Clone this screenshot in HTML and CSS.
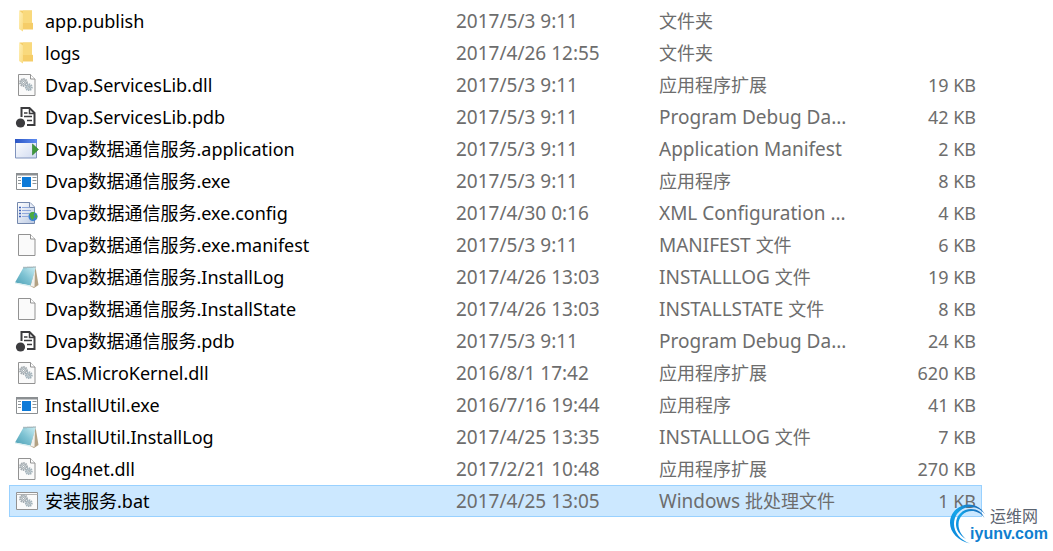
FILE: index.html
```html
<!DOCTYPE html>
<html lang="zh-CN">
<head>
<meta charset="utf-8">
<title>文件列表</title>
<link rel="stylesheet" href="styles.css">
</head>
<body>
<svg class="defs" aria-hidden="true">
  <defs>
    <linearGradient id="g-fold" x1="0" y1="0" x2="1" y2="1"><stop offset="0" stop-color="#fff0b8"/><stop offset="1" stop-color="#fadb80"/></linearGradient>
    <linearGradient id="g-bar" x1="0" x2="1"><stop offset="0" stop-color="#2b55c4"/><stop offset="1" stop-color="#5f8df0"/></linearGradient>
    <linearGradient id="g-win" x1="0" y1="0" x2="1" y2="1"><stop offset="0" stop-color="#ffffff"/><stop offset="1" stop-color="#cfdaf0"/></linearGradient>
    <linearGradient id="g-cfg" x1="0" y1="0" x2="1" y2="1"><stop offset="0" stop-color="#ffffff"/><stop offset="1" stop-color="#b9c8e2"/></linearGradient>
    <linearGradient id="g-note" x1="1" y1="0" x2="0" y2="1"><stop offset="0" stop-color="#cdeef3"/><stop offset=".5" stop-color="#7fc3d3"/><stop offset="1" stop-color="#4b9fb5"/></linearGradient>
    <linearGradient id="g-arc" x1="0" y1="1" x2="1" y2="0"><stop offset="0" stop-color="#0a7fd6"/><stop offset=".5" stop-color="#14a5ea"/><stop offset="1" stop-color="#1b5ca8"/></linearGradient>
    <g id="gears" fill="none">
      <circle cx="8.500" cy="9.500" r="3.400" stroke="#a3abb0" stroke-width="2" stroke-dasharray="1.500 .7"/>
      <circle cx="8.500" cy="9.500" r="2.600" fill="#dfe4e7" stroke="#a3abb0"/>
      <circle cx="8.500" cy="9.500" r="1" fill="#fff" stroke="#8a959b" stroke-width=".8"/>
      <circle cx="13.800" cy="14.200" r="3" stroke="#a3b2ba" stroke-width="1.800" stroke-dasharray="1.300 .7"/>
      <circle cx="13.800" cy="14.200" r="2.200" fill="#dbe5ea" stroke="#a3b2ba"/>
      <circle cx="13.800" cy="14.200" r=".9" fill="#fff" stroke="#8a959b" stroke-width=".8"/>
    </g>
    <symbol id="i-folder" viewBox="0 0 24 24">
      <path d="M4.500 1.500h12.500v12l1 .8v6.200H8z" fill="#f5cd68"/>
      <path d="M8 1.500h9v12.500H8z" fill="#f9d97c"/>
      <path d="M4 1.500L8 4.500V22.500L4 20z" fill="url(#g-fold)"/>
    </symbol>
    <symbol id="i-file" viewBox="0 0 24 24">
      <path d="M3.500 1.500h12l4.500 4.500v16.500h-16.500z" fill="#fafafa" stroke="#929292"/>
      <path d="M15.500 1.500v4.500h4.500" fill="#fff" stroke="#929292"/>
    </symbol>
    <symbol id="i-dll" viewBox="0 0 24 24"><use href="#i-file"/><use href="#gears"/></symbol>
    <symbol id="i-pdb" viewBox="0 0 24 24">
      <path d="M6.500 12V3h8l5 5V20H12" fill="#fff" stroke="#3c3c3f" stroke-width="2"/>
      <path d="M14.500 3v5.500H19.500" fill="none" stroke="#3c3c3f" stroke-width="1.500"/>
      <path d="M9 8h3.500M9 11.500h8M12 15.500h5" stroke="#3c3c3f" stroke-width="1.600"/>
      <circle cx="5.500" cy="18" r="4.600" fill="#3c3c3f"/>
    </symbol>
    <symbol id="i-app" viewBox="0 0 24 24">
      <path d="M.5 2.500h21v18.500h-21z" fill="url(#g-win)" stroke="#7f93bd"/>
      <path d="M0 2h22v4H0z" fill="url(#g-bar)"/>
      <path d="M17.500 7L23.500 12.500L17.500 18z" fill="#3f9a3c" stroke="#2c7a2b" stroke-width=".6"/>
    </symbol>
    <symbol id="i-exe" viewBox="0 0 24 24">
      <path d="M1.500 4.500h21v16h-21z" fill="#fff" stroke="#8b8f92"/>
      <path d="M1 4h22v2.500H1z" fill="#8b8f92"/>
      <path d="M7 8h9v10H7z" fill="#0d7ad8"/>
      <path d="M3 8.500h3M3 11.500h3M3 14.500h3M17.500 8.500h4M17.500 11.500h4M17.500 14.500h4" stroke="#8f9699"/>
    </symbol>
    <symbol id="i-cfg" viewBox="0 0 24 24">
      <path d="M2.500 1.500h12.500l4.500 4.500v16.500H2.500z" fill="url(#g-cfg)" stroke="#7488ad"/>
      <path d="M14.500 1.500v5h5" fill="#e8eef8" stroke="#7488ad"/>
      <path d="M4 6.500h2M4 9.500h2M4 12.500h2M4 15.500h2" stroke="#3c62b8" stroke-width="1.500"/>
      <path d="M7 6.500h7M7 9.500h9M7 12.500h7M7 15.500h6" stroke="#8fa8dc"/>
      <circle cx="18" cy="15.500" r="4.600" fill="#3a7fd0"/>
      <path d="M14.500 13c1-2 4-2.500 5.500-1.500l-1.500 2.500 1 2-2 3c-1.500-1-3-4-3-6zM20.500 13l1.800 2-1 3-1.300-2z" fill="#4cab3f"/>
    </symbol>
    <symbol id="i-note" viewBox="0 0 24 24">
      <path d="M20.500 2L23.500 20 19 23l-4-2z" fill="#b3a183"/>
      <path d="M20 4l-.5 18L15.500 21z" fill="#f1f1ee"/>
      <path d="M8.500 2.500L21 2 15.500 20.500 0 17.500z" fill="url(#g-note)"/>
      <path d="M8.500 2.500L21 2" stroke="#7b8b90" stroke-width="1.500" stroke-dasharray="1 1"/>
      <path d="M0 17.500l15.500 3-.3 1.200L0 18.500z" fill="#dceef0"/>
    </symbol>
    <symbol id="i-bat" viewBox="0 0 24 24">
      <path d="M1.500 3.500h21v17h-21z" fill="#fafafa" stroke="#929292"/>
      <path d="M1.500 5.500h21" stroke="#b4b4b4"/>
      <use href="#gears"/>
    </symbol>
  </defs>
</svg>
<main class="listing">
<table class="files">
  <colgroup><col class="c-name"><col class="c-date"><col class="c-type"><col class="c-size"></colgroup>
  <tbody>
  <tr><td class="name"><div class="entry"><svg class="icon"><use href="#i-folder"/></svg><span>app.publish</span></div></td><td>2017/5/3 9:11</td><td><span class="han">文件夹</span></td><td class="size"></td></tr>
  <tr><td class="name"><div class="entry"><svg class="icon"><use href="#i-folder"/></svg><span>logs</span></div></td><td>2017/4/26 12:55</td><td><span class="han">文件夹</span></td><td class="size"></td></tr>
  <tr><td class="name"><div class="entry"><svg class="icon"><use href="#i-dll"/></svg><span>Dvap.ServicesLib.dll</span></div></td><td>2017/5/3 9:11</td><td><span class="han">应用程序扩展</span></td><td class="size">19 KB</td></tr>
  <tr><td class="name"><div class="entry"><svg class="icon"><use href="#i-pdb"/></svg><span>Dvap.ServicesLib.pdb</span></div></td><td>2017/5/3 9:11</td><td>Program Debug Da...</td><td class="size">42 KB</td></tr>
  <tr><td class="name"><div class="entry"><svg class="icon"><use href="#i-app"/></svg><span>Dvap<span class="han">数据通信服务</span>.application</span></div></td><td>2017/5/3 9:11</td><td>Application Manifest</td><td class="size">2 KB</td></tr>
  <tr><td class="name"><div class="entry"><svg class="icon"><use href="#i-exe"/></svg><span>Dvap<span class="han">数据通信服务</span>.exe</span></div></td><td>2017/5/3 9:11</td><td><span class="han">应用程序</span></td><td class="size">8 KB</td></tr>
  <tr><td class="name"><div class="entry"><svg class="icon"><use href="#i-cfg"/></svg><span>Dvap<span class="han">数据通信服务</span>.exe.config</span></div></td><td>2017/4/30 0:16</td><td>XML Configuration ...</td><td class="size">4 KB</td></tr>
  <tr><td class="name"><div class="entry"><svg class="icon"><use href="#i-file"/></svg><span>Dvap<span class="han">数据通信服务</span>.exe.manifest</span></div></td><td>2017/5/3 9:11</td><td>MANIFEST <span class="han">文件</span></td><td class="size">6 KB</td></tr>
  <tr><td class="name"><div class="entry"><svg class="icon"><use href="#i-note"/></svg><span>Dvap<span class="han">数据通信服务</span>.InstallLog</span></div></td><td>2017/4/26 13:03</td><td>INSTALLLOG <span class="han">文件</span></td><td class="size">19 KB</td></tr>
  <tr><td class="name"><div class="entry"><svg class="icon"><use href="#i-file"/></svg><span>Dvap<span class="han">数据通信服务</span>.InstallState</span></div></td><td>2017/4/26 13:03</td><td>INSTALLSTATE <span class="han">文件</span></td><td class="size">8 KB</td></tr>
  <tr><td class="name"><div class="entry"><svg class="icon"><use href="#i-pdb"/></svg><span>Dvap<span class="han">数据通信服务</span>.pdb</span></div></td><td>2017/5/3 9:11</td><td>Program Debug Da...</td><td class="size">24 KB</td></tr>
  <tr><td class="name"><div class="entry"><svg class="icon"><use href="#i-dll"/></svg><span>EAS.MicroKernel.dll</span></div></td><td>2016/8/1 17:42</td><td><span class="han">应用程序扩展</span></td><td class="size">620 KB</td></tr>
  <tr><td class="name"><div class="entry"><svg class="icon"><use href="#i-exe"/></svg><span>InstallUtil.exe</span></div></td><td>2016/7/16 19:44</td><td><span class="han">应用程序</span></td><td class="size">41 KB</td></tr>
  <tr><td class="name"><div class="entry"><svg class="icon"><use href="#i-note"/></svg><span>InstallUtil.InstallLog</span></div></td><td>2017/4/25 13:35</td><td>INSTALLLOG <span class="han">文件</span></td><td class="size">7 KB</td></tr>
  <tr><td class="name"><div class="entry"><svg class="icon"><use href="#i-dll"/></svg><span>log4net.dll</span></div></td><td>2017/2/21 10:48</td><td><span class="han">应用程序扩展</span></td><td class="size">270 KB</td></tr>
  <tr class="selected"><td class="name"><div class="entry"><svg class="icon"><use href="#i-bat"/></svg><span><span class="han">安装服务</span>.bat</span></div></td><td>2017/4/25 13:05</td><td>Windows <span class="han">批处理文件</span></td><td class="size">1 KB</td></tr>
  </tbody>
</table>
<div class="brand">
  <svg class="swirl" viewBox="0 0 40 42" aria-hidden="true">
    <path d="M20 40.500C8 38 0 29 0 20 0 9 9 1.500 19 1.500c7 0 13 4 16 10C31 6 26 4 21 4 11 4 4 11.500 4 21c0 8 6 16 16 19.500z" fill="url(#g-arc)"/>
    <path d="M16 36C9 32 6 26 6 21 6 12 13 6 21 6c6 0 11 3 13.500 9C31 10 26 8 22 8 14 8 8.500 14 8.500 21.500c0 5 2.500 10.500 7.500 14.500z" fill="url(#g-arc)"/>
  </svg>
  <div class="brand-text"><span class="brand-cn">运维网</span><span class="brand-url">iyunv.com</span></div>
</div>
</main>
</body>
</html>
```

FILE: styles.css
```css
body {
  margin: 0;
  background: #fff;
  color: #6d6d6d;
  font-family: "Noto Sans", "Noto Sans CJK SC", sans-serif;
  font-size: 19px;
}
.defs {
  position: absolute;
  width: 0;
  height: 0;
}
.listing {
  position: relative;
  padding: 5px 71px 33px 9px;
}
.files {
  width: 100%;
  table-layout: fixed;
  border-collapse: separate;
  border-spacing: 0;
}
.c-date { width: 203px; }
.c-type { width: 190px; }
.c-size { width: 133px; }
.files td {
  box-sizing: border-box;
  height: 32px;
  padding: 0;
  line-height: 28px;
  white-space: nowrap;
  vertical-align: middle;
  border: 1px solid transparent;
  border-width: 1px 0;
}
.files .name {
  padding-left: 5px;
  border-left-width: 1px;
  color: #000;
  font-size: 18px;
}
.files .size {
  padding-right: 5px;
  border-right-width: 1px;
  font-size: 18px;
  text-align: right;
}
.entry {
  display: flex;
  align-items: center;
  gap: 6px;
}
.icon {
  flex: none;
  width: 24px;
  height: 24px;
}
.han {
  font-family: "Noto Sans CJK SC", sans-serif;
  font-size: 18px;
  line-height: 1;
}
.files .selected td {
  background: #cce8ff;
  border-color: #99d1ff;
}
.brand {
  position: absolute;
  right: 5px;
  bottom: 5px;
  display: flex;
}
.swirl {
  width: 40px;
  height: 42px;
}
.brand-text {
  display: flex;
  flex-direction: column;
  margin-left: -20px;
}
.brand-cn {
  padding-left: 20px;
  color: #5c6470;
  font-family: "Noto Sans CJK SC", sans-serif;
  font-size: 16px;
  line-height: 24px;
}
.brand-url {
  color: #0f7fd0;
  font-family: "Liberation Sans", sans-serif;
  font-size: 16px;
  font-weight: 700;
  line-height: 14px;
}
```
